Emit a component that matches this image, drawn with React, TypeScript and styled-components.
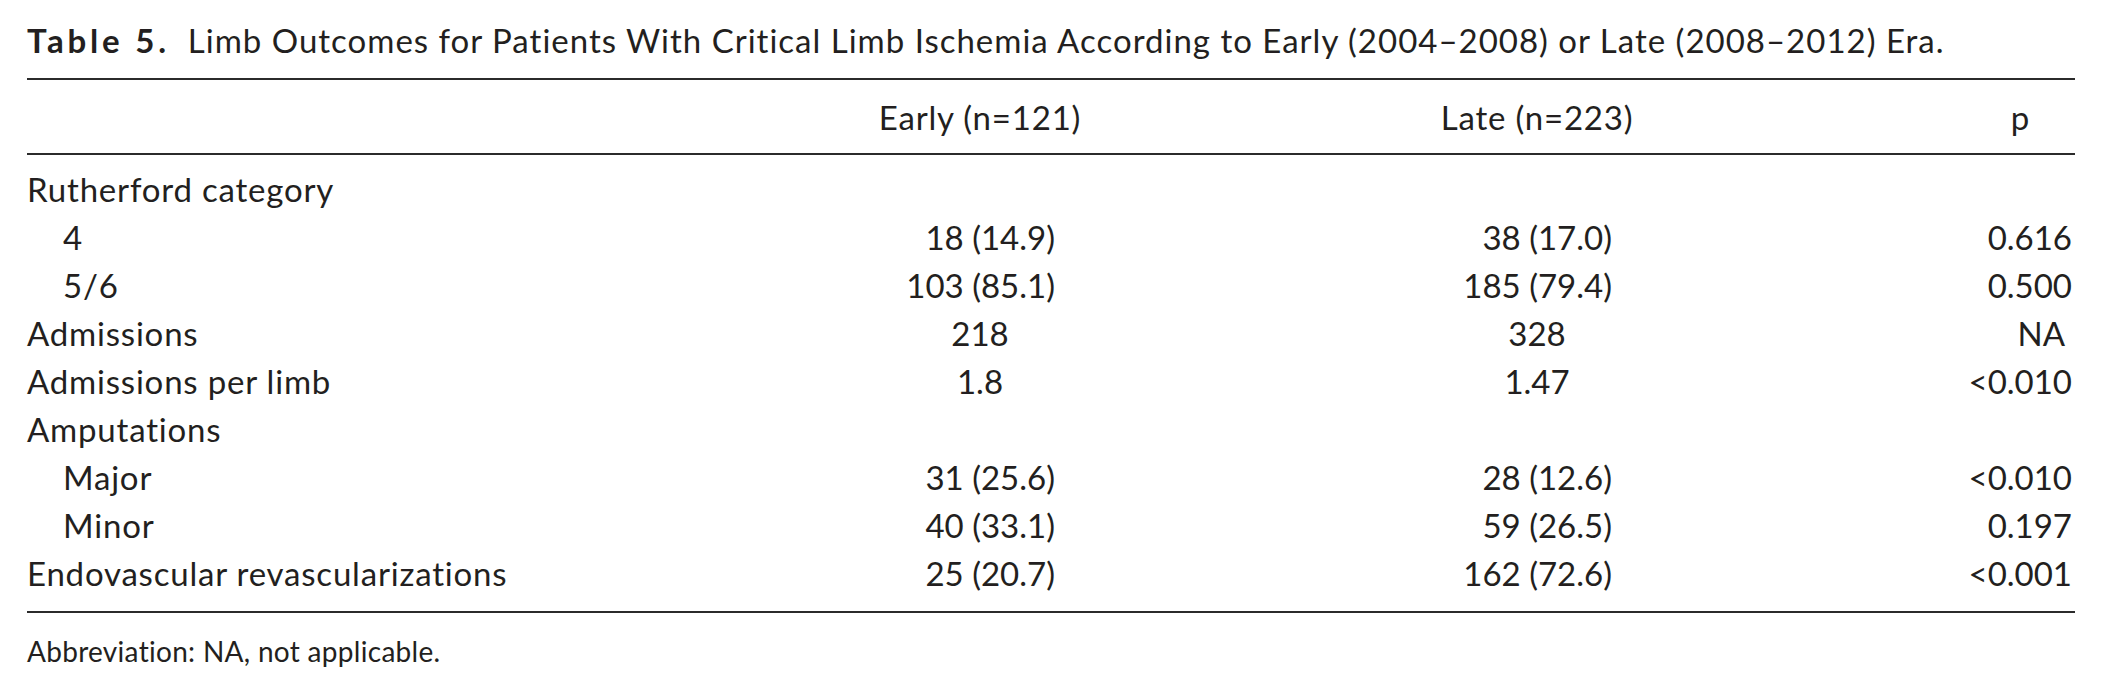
import React from 'react';
import styled, { createGlobalStyle } from 'styled-components';

const GlobalStyle = createGlobalStyle`
  html, body {
    margin: 0;
    padding: 0;
    background: #fff;
  }
  body {
    font-family: Lato, 'Open Sans', sans-serif;
    color: #231f20;
    -webkit-font-smoothing: antialiased;
  }
`;

const columns = '616px 440px 440px 1fr';

const Page = styled.div`
  width: 2101px;
  box-sizing: border-box;
  padding: 16px 26px 0 27px;
`;

const Caption = styled.div`
  font-size: 33px;
  letter-spacing: 1px;
  line-height: 48px;
  height: 48px;
  margin-bottom: 14px;
  white-space: nowrap;
`;

const CaptionLabel = styled.span`
  font-weight: 700;
  letter-spacing: 3.8px;
  margin-right: 18px;
`;

const Table = styled.div`
  border-top: 2px solid #2b2b2b;
  border-bottom: 2px solid #2b2b2b;
  font-size: 33px;
  letter-spacing: 0.8px;
  line-height: 48px;
`;

const Head = styled.div`
  display: grid;
  grid-template-columns: ${columns};
  column-gap: 117px;
  padding: 13px 0 12px;
  border-bottom: 2px solid #2b2b2b;
`;

const HeadCell = styled.div<{ $right?: boolean }>`
  text-align: ${({ $right }) => ($right ? 'right' : 'center')};
  padding-right: ${({ $right }) => ($right ? '45px' : '0')};
  white-space: nowrap;
`;

const Body = styled.div`
  padding: 10px 0 14px;
`;

const Row = styled.div`
  display: grid;
  grid-template-columns: ${columns};
  column-gap: 117px;
  height: 48px;
`;

const Label = styled.div<{ $indent?: boolean }>`
  padding-left: ${({ $indent }) => ($indent ? '36px' : '0')};
  white-space: nowrap;
`;

const Cell = styled.div`
  display: flex;
  justify-content: center;
`;

const ValueBox = styled.div<{ $pair: boolean }>`
  width: 150px;
  letter-spacing: 0;
  text-align: ${({ $pair }) => ($pair ? 'right' : 'center')};
  white-space: nowrap;
`;

const PCell = styled.div<{ $shift?: boolean }>`
  text-align: right;
  letter-spacing: 0;
  padding-right: ${({ $shift }) => ($shift ? '10px' : '3px')};
  white-space: nowrap;
`;

const Footnote = styled.div`
  font-size: 28px;
  letter-spacing: 0.3px;
  line-height: 48px;
  margin-top: 14px;
`;

type RowData = {
  label: string;
  indent?: boolean;
  early?: string;
  late?: string;
  p?: string;
};

const rows: RowData[] = [
  { label: 'Rutherford category' },
  { label: '4', indent: true, early: '18 (14.9)', late: '38 (17.0)', p: '0.616' },
  { label: '5/6', indent: true, early: '103 (85.1)', late: '185 (79.4)', p: '0.500' },
  { label: 'Admissions', early: '218', late: '328', p: 'NA' },
  { label: 'Admissions per limb', early: '1.8', late: '1.47', p: '<0.010' },
  { label: 'Amputations' },
  { label: 'Major', indent: true, early: '31 (25.6)', late: '28 (12.6)', p: '<0.010' },
  { label: 'Minor', indent: true, early: '40 (33.1)', late: '59 (26.5)', p: '0.197' },
  { label: 'Endovascular revascularizations', early: '25 (20.7)', late: '162 (72.6)', p: '<0.001' },
];

const Value = ({ text }: { text?: string }) => (
  <Cell>{text && <ValueBox $pair={text.includes('(')}>{text}</ValueBox>}</Cell>
);

export default function App() {
  return (
    <Page>
      <GlobalStyle />
      <Caption>
        <CaptionLabel>Table 5.</CaptionLabel>
        Limb Outcomes for Patients With Critical Limb Ischemia According to Early (2004–2008) or Late
        (2008–2012) Era.
      </Caption>
      <Table>
        <Head>
          <div />
          <HeadCell>Early (n=121)</HeadCell>
          <HeadCell>Late (n=223)</HeadCell>
          <HeadCell $right>p</HeadCell>
        </Head>
        <Body>
          {rows.map((r) => (
            <Row key={r.label}>
              <Label $indent={r.indent}>{r.label}</Label>
              <Value text={r.early} />
              <Value text={r.late} />
              <PCell $shift={r.p === 'NA'}>{r.p}</PCell>
            </Row>
          ))}
        </Body>
      </Table>
      <Footnote>Abbreviation: NA, not applicable.</Footnote>
    </Page>
  );
}
